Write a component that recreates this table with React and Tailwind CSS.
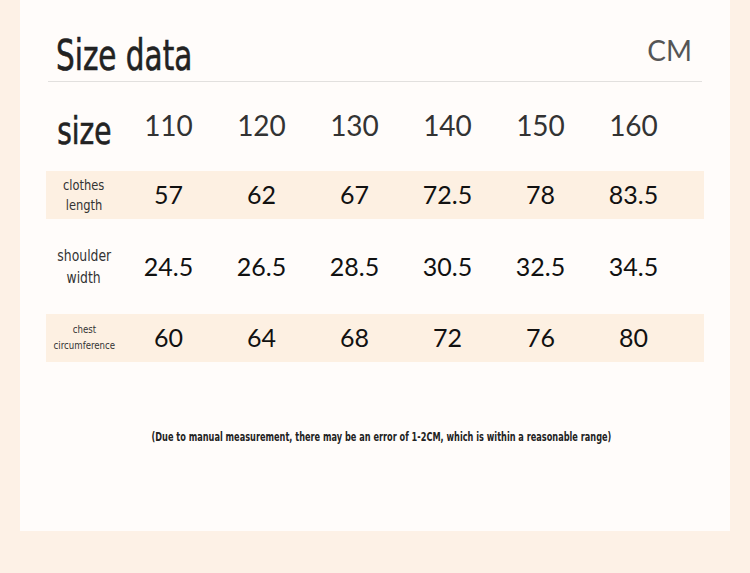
const sizes = ['110', '120', '130', '140', '150', '160'];

const rows = [
  { label: ['clothes', 'length'], values: ['57', '62', '67', '72.5', '78', '83.5'], shaded: true, labelClass: 'text-[14px] leading-[20px] scale-x-[0.91]' },
  { label: ['shoulder', 'width'], values: ['24.5', '26.5', '28.5', '30.5', '32.5', '34.5'], shaded: false, labelClass: 'text-[15px] leading-[22px] scale-x-[0.92]' },
  { label: ['chest', 'circumference'], values: ['60', '64', '68', '72', '76', '80'], shaded: true, labelClass: 'text-[11px] leading-[16px] scale-x-[0.87]' },
];

const cond = { fontFamily: '"DejaVu Sans Condensed", "DejaVu Sans", sans-serif' };
const num = { fontFamily: 'Lato, "Noto Sans", sans-serif' };

function Cell({ children }) {
  return <div className="w-[93px] flex items-center justify-center">{children}</div>;
}

export default function App() {
  return (
    <div className="w-[750px] h-[573px] bg-[#fdf1e6] overflow-hidden">
      <div className="mx-[20px] w-[710px] h-[531px] bg-[#fffcfa] px-[26px] pt-[32px]">
        <div className="flex items-end justify-between border-b border-[#e2e0de] pb-[1px] mx-[2px]">
          <h1 className="inline-block origin-left scale-x-[0.78] text-[42px] leading-[48px] text-[#222] ml-[8px] [-webkit-text-stroke:0.6px_#222]" style={cond}>Size data</h1>
          <span className="text-[28px] leading-[36px] text-[#555] mr-[10px] mb-[12px]" style={num}>CM</span>
        </div>

        <div className="mt-[16px] flex h-[60px] items-center">
          <div className="w-[76px] flex justify-center">
            <span className="inline-block scale-x-[0.84] text-[37px] leading-[40px] text-[#222] mt-[8px] [-webkit-text-stroke:0.6px_#222]" style={cond}>size</span>
          </div>
          {sizes.map((s) => (
            <Cell key={s}>
              <span className="text-[28px] text-[#333] -mt-[6px]" style={num}>{s}</span>
            </Cell>
          ))}
        </div>

        <div className="mt-[13px]">
          {rows.map((r, i) => (
            <div
              key={i}
              className={`flex items-center ${r.shaded ? 'bg-[#fdf0e2] h-[48px]' : 'h-[95px]'}`}
            >
              <div className="w-[76px] flex flex-col items-center text-[#333]" style={cond}>
                {r.label.map((l) => (
                  <span key={l} className={`inline-block whitespace-nowrap ${r.labelClass}`}>{l}</span>
                ))}
              </div>
              {r.values.map((v, j) => (
                <Cell key={j}>
                  <span className="text-[25px] text-[#111]" style={num}>{v}</span>
                </Cell>
              ))}
            </div>
          ))}
        </div>

        <div className="mt-[65px] flex justify-center pl-[13px]">
          <p className="inline-block whitespace-nowrap scale-x-[0.70] text-[13px] font-bold text-[#222]" style={cond}>
            (Due to manual measurement, there may be an error of 1-2CM, which is within a reasonable range)
          </p>
        </div>
      </div>
    </div>
  );
}
